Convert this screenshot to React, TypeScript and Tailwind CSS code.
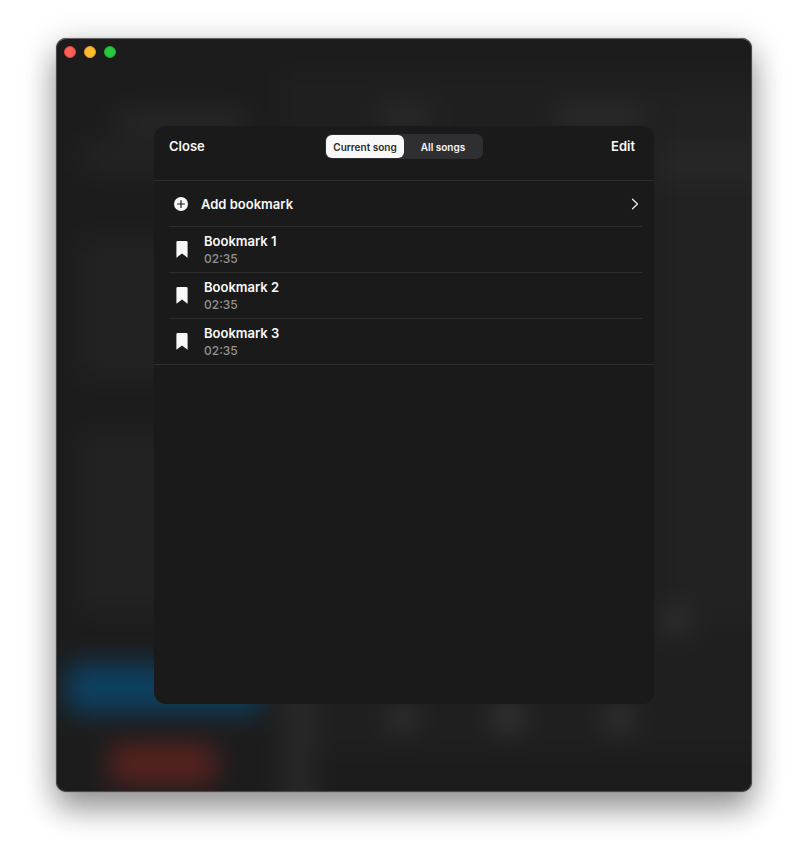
import clsx from "clsx";
import { useState } from "react";

type Scope = "current" | "all";

type Bookmark = {
  id: number;
  name: string;
  time: string;
};

const bookmarks: Bookmark[] = [
  { id: 1, name: "Bookmark 1", time: "02:35" },
  { id: 2, name: "Bookmark 2", time: "02:35" },
  { id: 3, name: "Bookmark 3", time: "02:35" },
];

const scopes: { value: Scope; label: string }[] = [
  { value: "current", label: "Current song" },
  { value: "all", label: "All songs" },
];

// The player behind the sheet, blurred. The base rect is blurred together
// with the shapes so that the dark gradients stay smooth.
function Backdrop() {
  return (
    <svg
      className="absolute inset-0 h-full w-full"
      viewBox="0 0 696 754"
      preserveAspectRatio="none"
      aria-hidden="true"
    >
      <defs>
        <filter
          id="soft"
          filterUnits="userSpaceOnUse"
          x="-60"
          y="-60"
          width="816"
          height="874"
          colorInterpolationFilters="sRGB"
        >
          <feGaussianBlur stdDeviation="13" />
        </filter>
      </defs>
      <g filter="url(#soft)">
        <rect x="-120" y="-120" width="936" height="994" fill="#1c1c1c" />
        <rect x="225" y="34" width="600" height="680" fill="#1f1f1f" />
        <rect x="610" y="60" width="160" height="520" fill="#222222" />
        <rect x="600" y="108" width="170" height="34" fill="#272727" />
        <rect x="60" y="74" width="130" height="20" fill="#292929" />
        <rect x="26" y="104" width="170" height="30" fill="#232323" />
        <rect x="24" y="200" width="170" height="140" fill="#222222" />
        <rect x="24" y="395" width="170" height="180" fill="#222222" />
        <rect x="228" y="600" width="30" height="220" fill="#292929" />
        <rect x="324" y="66" width="50" height="24" fill="#2a2a2a" />
        <rect x="500" y="66" width="90" height="24" fill="#2b2b2b" />
        <circle cx="346" cy="681" r="14" fill="#333333" />
        <circle cx="452" cy="679" r="16" fill="#363636" />
        <circle cx="563" cy="681" r="15" fill="#343434" />
        <circle cx="620" cy="583" r="16" fill="#2e2e2e" />
        <rect x="10" y="625" width="196" height="50" rx="8" fill="#0d3f5f" />
        <rect x="54" y="706" width="106" height="40" rx="8" fill="#57221f" />
      </g>
    </svg>
  );
}

function PlusIcon() {
  return (
    <svg className="size-[14px]" viewBox="0 0 14 14" aria-hidden="true">
      <circle cx="7" cy="7" r="7" fill="#f8f8f8" />
      <path d="M7 3.6v6.8M3.6 7h6.8" stroke="#1a1a1a" strokeWidth="1.2" strokeLinecap="round" />
    </svg>
  );
}

function BookmarkIcon() {
  return (
    <svg className="h-[17px] w-3" viewBox="0 0 12 17" aria-hidden="true">
      <path d="M1.6 0h8.8Q11.6 0 11.6 1.2V16.8L6 12.4.4 16.8V1.2Q.4 0 1.6 0Z" fill="#f8f8f8" />
    </svg>
  );
}

function ChevronIcon() {
  return (
    <svg className="h-3 w-2" viewBox="0 0 8 12" fill="none" aria-hidden="true">
      <path d="M1.5 1.2 6.5 6l-5 4.8" stroke="#f0f0f0" strokeWidth="1.2" strokeLinecap="round" strokeLinejoin="round" />
    </svg>
  );
}

function WindowControls() {
  return (
    <div className="relative flex gap-2 px-2 py-2">
      <button aria-label="Close window" className="size-3 rounded-full border border-[#e2463f] bg-[#ff5f57]" />
      <button aria-label="Minimize window" className="size-3 rounded-full border border-[#e0a028] bg-[#febc2e]" />
      <button aria-label="Zoom window" className="size-3 rounded-full border border-[#1dad2b] bg-[#28c840]" />
    </div>
  );
}

export default function App() {
  const [scope, setScope] = useState<Scope>("current");

  return (
    <div className="flex min-h-screen flex-col bg-white px-14 pt-[38px] pb-[74px] font-['Inter','Liberation_Sans',sans-serif] text-[13px] leading-4 font-semibold text-[#f8f8f8]">
      <div className="relative flex flex-1 flex-col overflow-hidden rounded-[10px] shadow-[0_0_1px_rgba(0,0,0,0.6),0_18px_30px_rgba(0,0,0,0.32),0_6px_36px_rgba(0,0,0,0.2)]">
        <Backdrop />
        <div className="pointer-events-none absolute inset-0 rounded-[10px] border border-t-[#666666] border-r-[#4a4a4a] border-b-[#4a4a4a] border-l-[#4a4a4a]" />
        <WindowControls />

        <div className="relative flex flex-1 justify-center px-4 pt-[60px] pb-[88px]">
          <section
            role="dialog"
            aria-label="Bookmarks"
            className="flex w-full max-w-[500px] flex-col rounded-xl bg-[#1a1a1a]"
          >
            <header className="grid grid-cols-[1fr_auto_1fr] items-start border-b border-[#2d2d2d] px-[15px] pt-2 pb-[21px]">
              <button className="h-6 justify-self-start">Close</button>
              <div
                role="tablist"
                className="grid grid-cols-2 rounded-[7px] bg-[#2f2f31] p-px text-[10px]"
              >
                {scopes.map(({ value, label }) => (
                  <button
                    key={value}
                    role="tab"
                    aria-selected={scope === value}
                    onClick={() => setScope(value)}
                    className={clsx(
                      "h-[23px] min-w-[78px] rounded-md px-1 whitespace-nowrap",
                      scope === value && "bg-[#f8f8f8] text-[#2a2a2a]",
                    )}
                  >
                    {label}
                  </button>
                ))}
              </div>
              <button className="h-6 justify-self-end px-1">Edit</button>
            </header>

            <div className="border-b border-[#2d2d2d] pr-3 pl-[15px]">
              <button className="flex h-[46px] w-full items-center border-b border-[#2d2d2d] pr-[3px] pl-[5px]">
                <PlusIcon />
                <span className="ml-[13px] flex-1 text-left">Add bookmark</span>
                <ChevronIcon />
              </button>
              <ul className="divide-y divide-[#2d2d2d]">
                {bookmarks.map((bookmark) => (
                  <li key={bookmark.id}>
                    <button className="flex h-[45px] w-full items-center gap-4 pl-[7px] text-left">
                      <BookmarkIcon />
                      <span className="flex flex-col gap-0.5">
                        <span>{bookmark.name}</span>
                        <span className="text-xs font-medium text-[#929292]">{bookmark.time}</span>
                      </span>
                    </button>
                  </li>
                ))}
              </ul>
            </div>
          </section>
        </div>
      </div>
    </div>
  );
}
